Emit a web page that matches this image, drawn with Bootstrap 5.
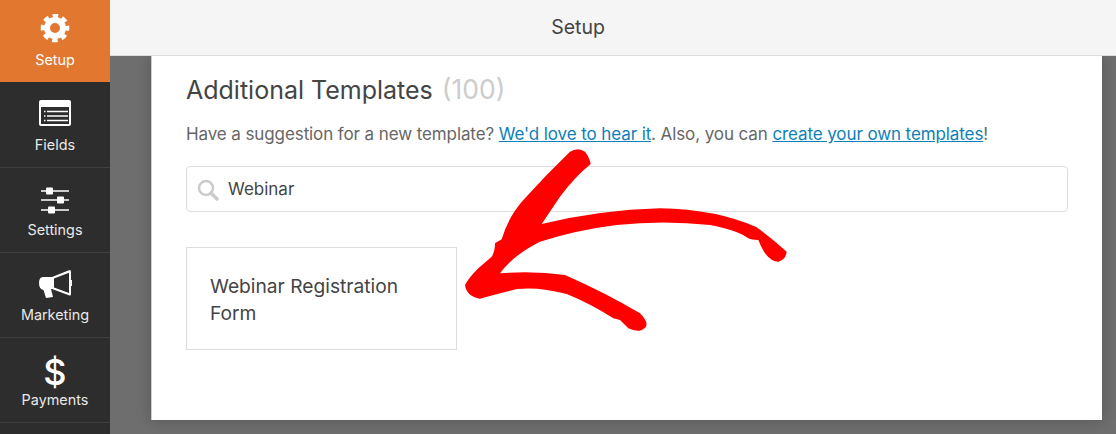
<!DOCTYPE html>
<html lang="en">
<head>
    <meta charset="UTF-8">
    <meta name="viewport" content="width=device-width, initial-scale=1.0">
    <title>Setup</title>
    <link href="https://cdn.jsdelivr.net/npm/bootstrap@5.3.0/dist/css/bootstrap.min.css" rel="stylesheet">
    <style>
        html, body { height: 434px; overflow: hidden; }
        body { font-family: Inter, "Liberation Sans", sans-serif; color: #444; background: #6c6c6c; }
        .side-bar { width: 110px; background: #2d2d2d; }
        .side-item { height: 85px; color: #e8e8e8; font-size: 14.4px; line-height: 17px; border-bottom: 1px solid #3e3e3e; text-decoration: none; padding-bottom: 14px; }
        .side-item.is-active { height: 82px; margin-bottom: 1px; background: #e27730; color: #fff; border-bottom: 0; padding-bottom: 14px; }
        .side-icon { height: 37px; }
        .dollar-glyph { font-weight: 500; font-size: 36px; line-height: 37px; color: #fff; }
        .top-bar { height: 56px; background: #f5f5f5; border-bottom: 1px solid #ddd; font-size: 19.500px; color: #444; padding-right: 70px; }
        .stage { background: #6e6e6e; padding: 0 14px 14px 41px; overflow: hidden; }
        .sheet { background: #fff; border-left: 1px solid #ccc; box-shadow: 0 0 14px rgba(0, 0, 0, .22); padding: 16px 34px 0 34px; height: 364px; }
        .sheet-title { font-size: 25px; font-weight: 400; line-height: 36px; height: 36px; color: #444; margin-bottom: 15px; }
        .sheet-title span { color: #ccc; font-size: 26.500px; line-height: 1; margin-left: 2px; }
        .sheet-note { font-size: 17px; letter-spacing: -.1px; line-height: 22px; color: #666; margin-bottom: 21px; }
        .sheet-note a { color: #0e7fb8; }
        .search-box { height: 46px; padding-left: 41px; font-size: 17px; color: #444; border-color: #ddd; border-radius: 4px; }
        .search-glyph { left: 11px; top: 13px; }
        .tpl-card { width: 271px; height: 103px; margin-top: 35px; padding: 25px 23px; font-size: 19.200px; line-height: 27px; color: #444; border: 1px solid #ddd; border-radius: 0; }
        .arrow-mark { left: 450px; top: 140px; }
    </style>
</head>
<body class="d-flex position-relative">
    <nav class="side-bar d-flex flex-column flex-shrink-0">
        <a href="#" class="side-item is-active d-flex flex-column align-items-center justify-content-end">
            <svg class="side-icon" width="32" height="37" viewBox="0 0 32 37"><circle cx="16" cy="14" r="8" fill="none" stroke="#fff" stroke-width="6"/><circle cx="16" cy="14" r="12.300" fill="none" stroke="#fff" stroke-width="4" stroke-dasharray="5.500 4.160" stroke-dashoffset="2.750"/></svg>
            Setup
        </a>
        <a href="#" class="side-item d-flex flex-column align-items-center justify-content-end">
            <svg class="side-icon" width="32" height="37" viewBox="0 0 32 37"><rect y="1" width="32" height="26" rx="2" fill="#fff"/><rect x="2" y="8" width="28" height="17" fill="#2d2d2d"/><path d="M8 12.500h21M8 17h21M8 21.500h21M5 12.500h1.500M5 17h1.500M5 21.500h1.500" stroke="#fff" stroke-width="1.500"/></svg>
            Fields
        </a>
        <a href="#" class="side-item d-flex flex-column align-items-center justify-content-end">
            <svg class="side-icon" width="28" height="37" viewBox="0 0 28 37"><path d="M0 7h28M0 16h28M0 26h28" stroke="#fff" stroke-width="1.500"/><rect x="5" y="3.500" width="7" height="7" rx="1" fill="#fff"/><rect x="16" y="12.500" width="7" height="7" rx="1" fill="#fff"/><rect x="7" y="22.500" width="7" height="7" rx="1" fill="#fff"/></svg>
            Settings
        </a>
        <a href="#" class="side-item d-flex flex-column align-items-center justify-content-end">
            <svg class="side-icon" width="34" height="37" viewBox="0 0 34 37"><g transform="translate(1 0)"><path d="M4 8H13L30.500 1Q32 1 32 2.500V25Q32 27 30.500 26.500L13 20H12L14 28L7 29L4.500 21Q0 20 0 14T4 8Z" fill="#fff"/><path d="M15 9.500L30 3.800V24L15 18.500Z" fill="#2d2d2d"/><rect x="32" y="11" width="1.500" height="6" fill="#fff"/></g></svg>
            Marketing
        </a>
        <a href="#" class="side-item d-flex flex-column align-items-center justify-content-end">
            <span class="side-icon dollar-glyph">$</span>
            Payments
        </a>
    </nav>
    <div class="flex-grow-1 d-flex flex-column">
        <header class="top-bar d-flex align-items-center justify-content-center">Setup</header>
        <main class="stage flex-grow-1">
            <section class="sheet">
                <h1 class="sheet-title">Additional Templates <span>(100)</span></h1>
                <p class="sheet-note">Have a suggestion for a new template? <a href="#">We'd love to hear it</a>. Also, you can <a href="#">create your own templates</a>!</p>
                <div class="position-relative">
                    <svg class="search-glyph position-absolute" width="22" height="22" viewBox="0 0 22 22" fill="none" stroke="#ccc"><circle cx="9" cy="9" r="7" stroke-width="2.500"/><path d="M14 14l6 6" stroke-width="3.500" stroke-linecap="round"/></svg>
                    <input class="form-control search-box" type="text" value="Webinar">
                </div>
                <div class="card tpl-card">Webinar Registration Form</div>
            </section>
        </main>
    </div>
    <svg class="arrow-mark position-absolute" width="350" height="210" viewBox="0 0 1050 630"><path fill="#f00" d="M360 35Q385 20 405 35Q418 50 422 72Q375 110 330 170L275 252Q450 210 630 205Q800 208 920 262Q965 295 1010 335Q1008 358 985 365Q950 365 925 300Q905 300 895 295Q860 270 780 255Q640 240 500 255Q380 270 270 305Q190 345 150 400Q250 392 345 405Q470 460 570 520Q595 545 588 560Q570 582 535 565L510 540L490 535Q420 490 350 462Q270 440 200 447Q130 465 90 476Q50 470 45 435Q55 415 85 385L125 350Q135 335 135 310L155 298Q175 230 220 180L290 105Z"/></svg>
    <script src="https://cdn.jsdelivr.net/npm/bootstrap@5.3.0/dist/js/bootstrap.bundle.min.js"></script>
</body>
</html>
